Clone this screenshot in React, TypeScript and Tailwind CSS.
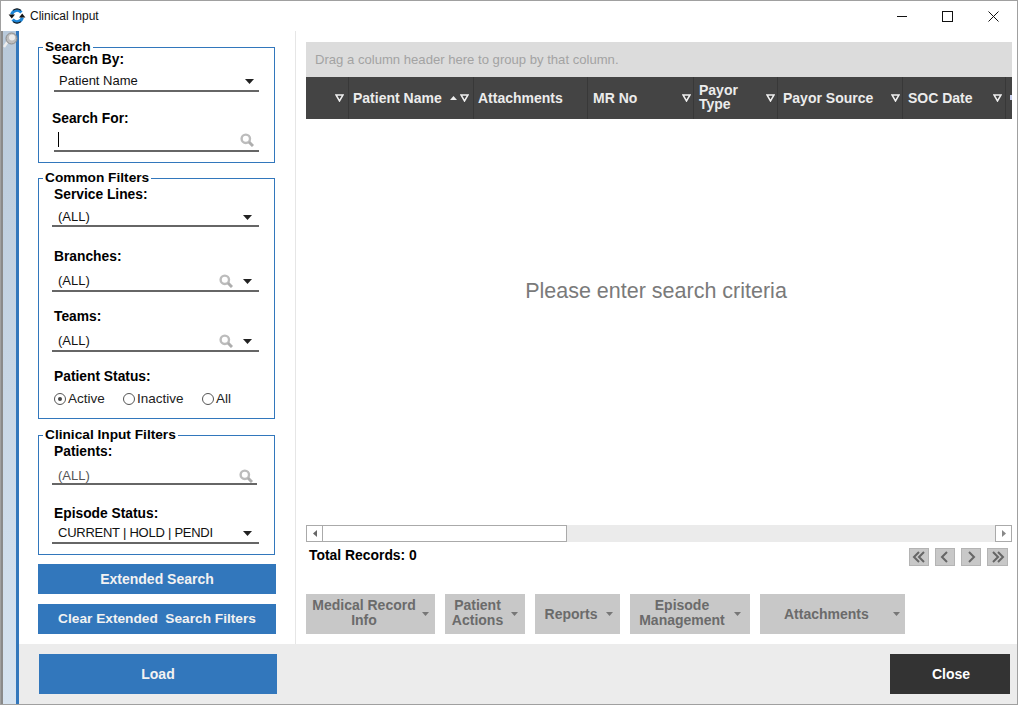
import React from "react";

function Caret({ className = "" }: { className?: string }) {
  return (
    <svg width="9" height="5" viewBox="0 0 9 5" className={className}>
      <path d="M0 0H9L4.5 5Z" fill="#222" />
    </svg>
  );
}

function Mag() {
  return (
    <svg width="14" height="14" viewBox="0 0 14 14" fill="none">
      <circle cx="5.8" cy="5.8" r="4.2" stroke="#bcbcbc" strokeWidth="2.4" />
      <path d="M9 9L13 13" stroke="#aeaeae" strokeWidth="3" />
    </svg>
  );
}

function Filter() {
  return (
    <svg width="9" height="8" viewBox="0 0 9 8" fill="none" className="shrink-0">
      <path d="M1 1H8L4.5 7Z" stroke="#f0f0f0" strokeWidth="1.5" />
    </svg>
  );
}

function Field({
  label,
  value,
  search,
  caret,
  top,
  mid,
  lift = "",
  right = "pr-[7px]",
  valueClass = "text-[#111]",
}: {
  label: string;
  value: React.ReactNode;
  search?: boolean;
  caret?: boolean;
  top: string;
  mid: string;
  lift?: string;
  right?: string;
  valueClass?: string;
}) {
  return (
    <div className={top}>
      <div className="text-[13.8px] leading-[16px] font-bold text-black">{label}</div>
      <div className={`${mid} ${lift} ${right} -ml-[2px] h-[20px] border-b-2 border-[#666] flex items-center pl-[6px] text-[13px]`}>
        <span className={`flex-1 ${valueClass}`}>{value}</span>
        {search && <Mag />}
        {caret && <Caret className="ml-[10px]" />}
      </div>
    </div>
  );
}

function Group({ title, className, children }: { title: string; className: string; children: React.ReactNode }) {
  return (
    <div className={`relative w-[237px] border border-[#3277bc] px-[15px] ${className}`}>
      <span className="absolute left-[4px] -top-[9px] bg-white px-[2px] text-[13.7px] leading-[16px] font-bold text-black">
        {title}
      </span>
      {children}
    </div>
  );
}

function Radio({ label, on, w }: { label: string; on?: boolean; w: string }) {
  return (
    <span className={`flex items-center ${w} text-[13.5px] text-[#222]`}>
      <span className="w-[12px] h-[12px] rounded-full border border-[#555] flex items-center justify-center mr-[2px]">
        {on && <span className="w-[4px] h-[4px] rounded-full bg-[#444]" />}
      </span>
      {label}
    </span>
  );
}

function Col({
  w,
  children,
  filter = true,
  tail,
  pad = "pl-[5px] pr-[2px]",
}: {
  w: string;
  children?: React.ReactNode;
  filter?: boolean;
  tail?: React.ReactNode;
  pad?: string;
}) {
  return (
    <div className={`${w} ${pad} h-full shrink-0 flex items-center border-r border-[#383838] text-[14px] leading-[14px] font-bold text-[#ececec]`}>
      <span className="flex-1">{children}</span>
      {tail}
      {filter && <Filter />}
    </div>
  );
}

function ActionBtn({
  w,
  children,
  caretLeft = "ml-[6px]",
  box = "justify-center",
  text = "pb-[2px]",
}: {
  w: string;
  children: React.ReactNode;
  caretLeft?: string;
  box?: string;
  text?: string;
}) {
  return (
    <div className={`${w} ${box} h-[40px] bg-[#c8c8c8] flex items-center text-[14px] leading-[15px] font-bold text-[#6b6b6b] text-center`}>
      <span className={text}>{children}</span>
      <svg width="7" height="4" viewBox="0 0 7 4" className={caretLeft}>
        <path d="M0 0H7L3.5 4Z" fill="#777" />
      </svg>
    </div>
  );
}

function Pager({ d, w = "w-[20px]" }: { d: string; w?: string }) {
  return (
    <div className={`${w} h-[18px] bg-[#c8c8c8] border border-[#b4b4b4] flex items-center justify-center`}>
      <svg width="14" height="12" viewBox="0 0 14 12" fill="none">
        <path d={d} stroke="#666" strokeWidth="2" />
      </svg>
    </div>
  );
}

export default function App() {
  return (
    <div
      className="w-[1018px] h-[705px] border border-[#a0a0a0] bg-white flex flex-col overflow-hidden"
      style={{ fontFamily: '"Liberation Sans", Arial, sans-serif' }}
    >
      <div className="h-[30px] shrink-0 flex items-center pl-[7px]">
        <svg width="18" height="18" viewBox="0 0 18 18" fill="none">
          <path d="M3.6 7.5A5.6 5.6 0 0 1 13.4 5.5" stroke="#1b84d6" strokeWidth="3" />
          <path d="M14.4 10.5A5.6 5.6 0 0 1 4.6 12.5" stroke="#1b84d6" strokeWidth="3" />
          <path d="M0.6 7.5H7L3.8 11.5Z" fill="#151515" />
          <path d="M17.4 10.5H11L14.2 6.5Z" fill="#151515" />
          <path d="M5 14.6A6.4 6.4 0 0 0 13 14.6" stroke="#151515" strokeWidth="1.2" />
          <path d="M5 3.4A6.4 6.4 0 0 1 13 3.4" stroke="#151515" strokeWidth="1.2" />
        </svg>
        <span className="ml-[4px] text-[12px] text-[#111]">Clinical Input</span>
        <div className="ml-auto flex items-center">
          <svg width="10" height="10" viewBox="0 0 10 10" className="mr-[35px]"><path d="M0 5.5H10" stroke="#111" /></svg>
          <svg width="11" height="11" viewBox="0 0 11 11" className="mr-[35px]"><rect x="0.5" y="0.5" width="10" height="10" fill="none" stroke="#111" /></svg>
          <svg width="11" height="11" viewBox="0 0 11 11" className="mr-[18px]"><path d="M0.5 0.5L10.5 10.5M10.5 0.5L0.5 10.5" stroke="#111" /></svg>
        </div>
      </div>

      <div className="flex-1 flex min-h-0">
        <div className="w-[18px] shrink-0 border-l-2 border-l-[#8a8a8a] border-r-[3px] border-r-[#3277bc] bg-gradient-to-b from-[#b8c9da] to-[#d6e3f0] relative">
          <svg width="15" height="17" viewBox="0 0 15 17" className="absolute left-0 top-[1px]">
            <path d="M5 9L1 15" stroke="#eeeeee" strokeWidth="2.4" />
            <circle cx="8.5" cy="6.5" r="5.5" fill="#bdbdbd" stroke="#8c8c8c" />
            <circle cx="9" cy="5.5" r="3" fill="#ececec" />
          </svg>
        </div>
        <div className="flex-1 flex flex-col min-w-0">
          <div className="h-[613px] flex">
            <div className="w-[277px] shrink-0 border-r border-[#e6e6e6] pl-[19px] pt-[16px]">
              <Group title="Search" className="h-[116px]">
                <div className="-ml-[2px] mt-[4px] text-[13.8px] leading-[16px] font-bold">Search By:</div>
                <div className="mt-[4px] h-[20px] border-b-2 border-[#666] flex items-center pl-[5px] pr-[5px] text-[13px] text-[#111]">
                  <span className="flex-1">Patient Name</span>
                  <Caret />
                </div>
                <div className="-ml-[2px] mt-[19px] text-[13.8px] leading-[16px] font-bold">Search For:</div>
                <div className="mt-[5px] h-[20px] border-b-2 border-[#666] flex items-center pl-[4px] pr-[5px] pb-[3px]">
                  <span className="w-px h-[15px] bg-black" />
                  <span className="flex-1" />
                  <Mag />
                </div>
              </Group>
              <Group title="Common Filters" className="h-[241px] mt-[15px]">
                <Field label="Service Lines:" value="(ALL)" caret top="mt-[8px]" mid="mt-[4px]" lift="pt-[2px]" />
                <Field label="Branches:" value="(ALL)" search caret top="mt-[22px]" mid="mt-[7px]" />
                <Field label="Teams:" value="(ALL)" search caret top="mt-[17px]" mid="mt-[7px]" />
                <div className="mt-[17px] text-[13.8px] leading-[16px] font-bold">Patient Status:</div>
                <div className="mt-[5px] flex items-center h-[18px]">
                  <Radio label="Active" on w="w-[69px]" />
                  <Radio label="Inactive" w="w-[79px]" />
                  <Radio label="All" w="w-[40px]" />
                </div>
              </Group>
              <Group title="Clinical Input Filters" className="h-[120px] mt-[16px]">
                <Field label="Patients:" value="(ALL)" search top="mt-[8px]" mid="mt-[5px]" lift="pt-[3px] mr-[2px]" right="pr-[4px]" valueClass="text-[#555]" />
                <Field
                  label="Episode Status:"
                  value="CURRENT | HOLD | PENDI"
                  caret
                  top="mt-[21px]"
                  mid="mt-[2px]"
                  valueClass="text-[#111] tracking-[-0.25px]"
                />
              </Group>
              <div className="w-[238px] h-[30px] mt-[9px] bg-[#3277bc] text-[#f2f2f2] text-[14px] font-bold flex items-center justify-center">
                Extended Search
              </div>
              <div className="w-[238px] h-[30px] mt-[10px] bg-[#3277bc] text-[#f2f2f2] text-[13.7px] font-bold flex items-center justify-center">
                Clear Extended&nbsp; Search Filters
              </div>
            </div>

            <div className="flex-1 min-w-0 pl-[10px] pr-[5px] pt-[11px] flex flex-col">
              <div className="h-[35px] shrink-0 bg-[#dcdcdc] flex items-center pl-[9px] text-[13.1px] text-[#a3a3a3]">
                Drag a column header here to group by that column.
              </div>
              <div className="h-[42px] shrink-0 bg-[#444] flex overflow-hidden">
                <Col w="w-[43px]" pad="pl-[5px] pr-[4px]" />
                <Col w="w-[125px]" pad="pl-[4px] pr-[4px]" tail={<svg width="7" height="4" viewBox="0 0 7 4" className="mr-[3px]"><path d="M0 4H7L3.5 0Z" fill="#eee" /></svg>}>Patient Name</Col>
                <Col w="w-[114px]" pad="pl-[4px] pr-[2px]" filter={false}>Attachments</Col>
                <Col w="w-[106px]">MR No</Col>
                <Col w="w-[84px]"><span className="block pb-[2px]">Payor<br />Type</span></Col>
                <Col w="w-[125px]">Payor Source</Col>
                <Col w="w-[103px]" pad="pl-[5px] pr-[3px]">SOC Date</Col>
                <div className="flex-1 flex items-center justify-end pb-[2px]">
                  <span className="w-[2px] h-[5px] bg-[#c9d0ee]" />
                </div>
              </div>
              <div className="flex-1 min-h-0 flex items-start justify-center pt-[156px] pr-[6px] text-[21.5px] text-[#7a7a7a]">
                Please enter search criteria
              </div>
              <div className="h-[17px] shrink-0 bg-[#ebebeb] flex justify-between">
                <div className="flex">
                  <div className="w-[17px] h-[17px] bg-white border border-[#aaa] flex items-center justify-center">
                    <svg width="4" height="7" viewBox="0 0 4 7"><path d="M4 0V7L0 3.5Z" fill="#666" /></svg>
                  </div>
                  <div className="w-[244px] h-[17px] bg-white border border-l-0 border-[#aaa]" />
                </div>
                <div className="w-[17px] h-[17px] bg-white border border-[#aaa] flex items-center justify-center">
                  <svg width="4" height="7" viewBox="0 0 4 7"><path d="M0 0V7L4 3.5Z" fill="#888" /></svg>
                </div>
              </div>
              <div className="h-[24px] shrink-0 mt-[6px] flex items-start justify-between pl-[3px]">
                <span className="text-[13.9px] leading-[14px] font-bold text-black">Total Records: 0</span>
                <div className="flex gap-[6px] mr-[4px]">
                  <Pager d="M7 1L2 6L7 11M12 1L7 6L12 11" />
                  <Pager d="M9 1L4 6L9 11" />
                  <Pager d="M5 1L10 6L5 11" />
                  <Pager w="w-[21px]" d="M2 1L7 6L2 11M7 1L12 6L7 11" />
                </div>
              </div>
              <div className="mt-[22px] mb-[10px] flex gap-[10px]">
                <ActionBtn w="w-[129px]">Medical Record<br />Info</ActionBtn>
                <ActionBtn w="w-[80px]" caretLeft="ml-[8px]">Patient<br />Actions</ActionBtn>
                <ActionBtn w="w-[85px]" caretLeft="ml-[9px]" box="justify-center pl-[3px]" text="">Reports</ActionBtn>
                <ActionBtn w="w-[120px]" caretLeft="ml-[9px]">Episode<br />Management</ActionBtn>
                <ActionBtn w="w-[145px]" caretLeft="ml-[24px]" box="justify-start pl-[24px]" text="">Attachments</ActionBtn>
              </div>
            </div>
          </div>
          <div className="flex-1 bg-[#ececec] flex items-start justify-between pt-[10px] pl-[20px] pr-[7px]">
            <div className="w-[238px] h-[40px] bg-[#3277bc] text-[#f2f2f2] text-[14px] font-bold flex items-center justify-center">Load</div>
            <div className="w-[120px] h-[40px] bg-[#333] text-white text-[14px] font-bold flex items-center justify-center pl-[2px]">Close</div>
          </div>
        </div>
      </div>
    </div>
  );
}
